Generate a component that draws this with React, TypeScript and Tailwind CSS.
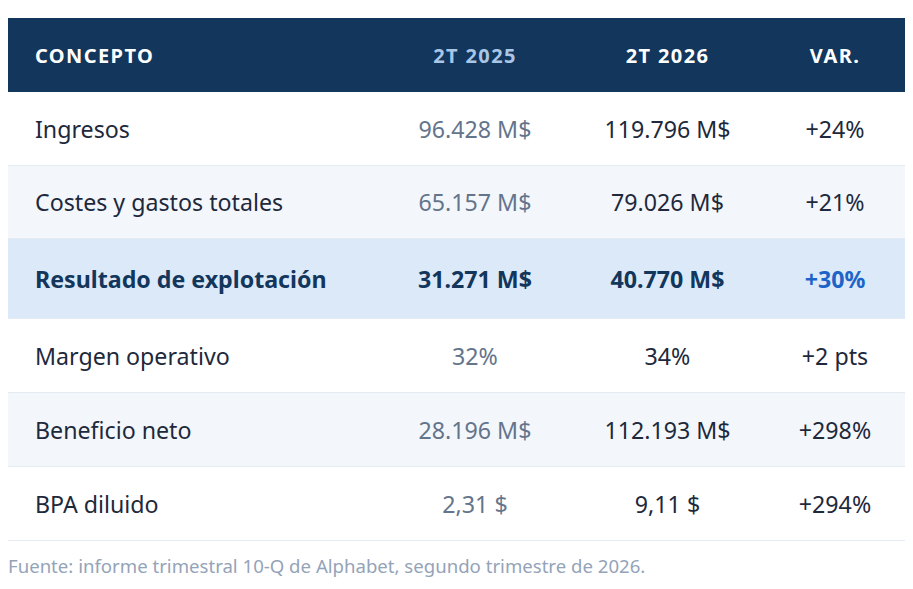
import React from "react";

type Row = {
  label: string;
  a: string;
  b: string;
  v: string;
  alt?: boolean;
  hl?: boolean;
  h: string;
};

const rows: Row[] = [
  { label: "Ingresos", a: "96.428 M$", b: "119.796 M$", v: "+24%", h: "h-[73px]" },
  { label: "Costes y gastos totales", a: "65.157 M$", b: "79.026 M$", v: "+21%", alt: true, h: "h-[73px]" },
  { label: "Resultado de explotación", a: "31.271 M$", b: "40.770 M$", v: "+30%", hl: true, h: "h-[80px]" },
  { label: "Margen operativo", a: "32%", b: "34%", v: "+2 pts", h: "h-[74px]" },
  { label: "Beneficio neto", a: "28.196 M$", b: "112.193 M$", v: "+298%", alt: true, h: "h-[74px]" },
  { label: "BPA diluido", a: "2,31 $", b: "9,11 $", v: "+294%", h: "h-[74px]" },
];

export default function App() {
  return (
    <div
      className="bg-white w-[913px] h-[589px] pt-[18px] px-[8px]"
      style={{ fontFamily: '"Noto Sans", "Open Sans", sans-serif' }}
    >
      <table className="w-[897px] table-fixed border-collapse">
        <colgroup>
          <col className="w-[372px]" />
          <col className="w-[190px]" />
          <col className="w-[195px]" />
          <col className="w-[140px]" />
        </colgroup>
        <thead>
          <tr className="h-[74px] bg-[#12365c] text-[20px] font-bold tracking-[0.07em] uppercase">
            <th className="text-left pl-[27px] pt-[2px] text-white">Concepto</th>
            <th className="text-center pt-[2px] text-[#a9c6e6]">2T 2025</th>
            <th className="text-center pt-[2px] text-white">2T 2026</th>
            <th className="text-center pt-[2px] text-white">Var.</th>
          </tr>
        </thead>
        <tbody>
          {rows.map((r) => (
            <tr
              key={r.label}
              className={`${r.h} border-b border-[#e5ebf2] ${
                r.hl ? "bg-[#dce9f8] font-bold text-[#12365c]" : r.alt ? "bg-[#f3f7fc] text-[#1e293b]" : "bg-white text-[#1e293b]"
              } text-[23.2px]`}
            >
              <td className="pl-[27px] pt-[2px] text-left">{r.label}</td>
              <td className={`text-center pt-[2px] ${r.hl ? "text-[#12365c]" : "text-[#64748b]"}`}>{r.a}</td>
              <td className="text-center pt-[2px]">{r.b}</td>
              <td className={`text-center pt-[2px] ${r.hl ? "text-[#1e64c8]" : ""}`}>{r.v}</td>
            </tr>
          ))}
        </tbody>
      </table>
      <p className="mt-[11px] text-[18.6px] leading-[28px] text-[#94a3b8]">
        Fuente: informe trimestral 10-Q de Alphabet, segundo trimestre de 2026.
      </p>
    </div>
  );
}
